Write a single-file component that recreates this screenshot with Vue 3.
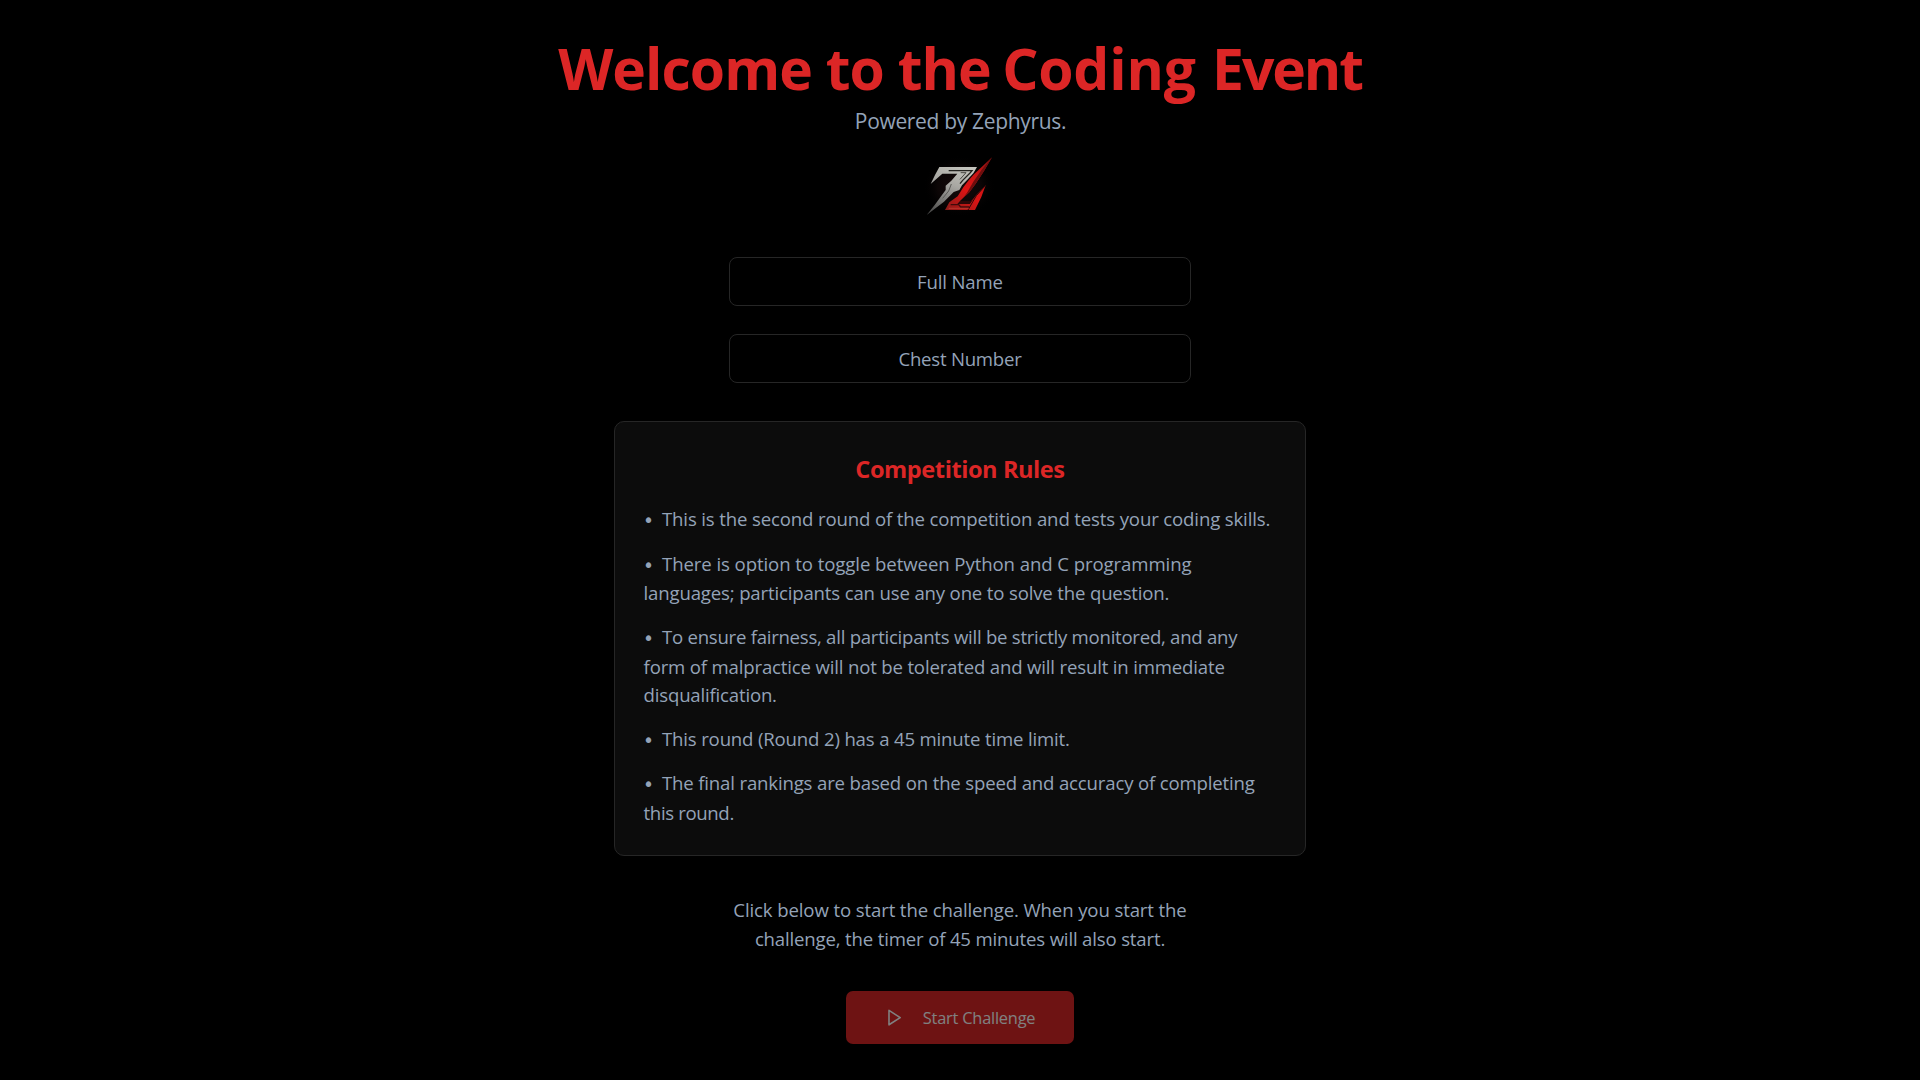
<script setup>
const rules = [
  [{ text: 'This is the second round of the competition and tests your coding skills.', ls: -0.144 }],
  [
    { text: 'There is option to toggle between Python and C programming', ls: -0.085 },
    { text: 'languages; participants can use any one to solve the question.', ls: -0.164 },
  ],
  [
    { text: 'To ensure fairness, all participants will be strictly monitored, and any', ls: -0.26 },
    { text: 'form of malpractice will not be tolerated and will result in immediate', ls: -0.172, shift: 1 },
    { text: 'disqualification.', ls: -0.189, shift: -1 },
  ],
  [{ text: 'This round (Round 2) has a 45 minute time limit.', ls: -0.169 }],
  [
    { text: 'The final rankings are based on the speed and accuracy of completing', ls: -0.165 },
    { text: 'this round.', ls: -0.36, shift: 1 },
  ],
]
const lineStyle = (l) => ({ letterSpacing: l.ls + 'px', marginTop: (l.shift || 0) + 'px' })
</script>

<template>
  <main class="page">
    <h1 class="title">Welcome to the <span class="coding">Coding</span> <span class="event">Event</span></h1>
    <p class="powered">Powered by Zephyrus.</p>
    <svg class="logo" viewBox="0 0 300 240" aria-label="Zephyrus logo">
      <defs>
        <linearGradient id="silver" gradientUnits="userSpaceOnUse" x1="150" y1="60" x2="90" y2="210">
          <stop offset="0" stop-color="#c4c4bd" />
          <stop offset="0.4" stop-color="#a8a7a2" />
          <stop offset="0.65" stop-color="#858481" />
          <stop offset="1" stop-color="#4c4c4b" />
        </linearGradient>
        <linearGradient id="red" gradientUnits="userSpaceOnUse" x1="246" y1="37" x2="110" y2="195">
          <stop offset="0" stop-color="#7c1010" />
          <stop offset="0.3" stop-color="#c81414" />
          <stop offset="0.6" stop-color="#dc1414" />
          <stop offset="1" stop-color="#8c1b18" />
        </linearGradient>
        <radialGradient id="glow">
          <stop offset="0" stop-color="#241010" stop-opacity="0.6" />
          <stop offset="0.6" stop-color="#140a0a" stop-opacity="0.6" />
          <stop offset="1" stop-color="#000" stop-opacity="0" />
        </radialGradient>
      </defs>
      <ellipse cx="148" cy="124" rx="108" ry="92" fill="url(#glow)" />
      <path d="M88 66H201L190 85L172 104L156 121L148 135L131 141L119 153L102 170L50 210L74 180L92 155L107 135V122L124 107L142 86H97L62 117L75 90Z" fill="url(#silver)" />
      <path d="M116 77H186L180 84L158 106L150 116" fill="none" stroke="#24231f" stroke-width="4" />
      <path d="M152 83L168 83L150 103" fill="none" stroke="#4a4944" stroke-width="3" />
      <path d="M124 117L116 138L98 160" fill="none" stroke="#5a5956" stroke-width="3" />
      <path d="M246 37L222 78L197 116L178 142L160 158L150 168H184L199 150L227 121L214 156L195 195H105L118 172L143 154L160 127L176 106L192 88Z" fill="url(#red)" />
      <path d="M246 37L222 78L197 116L178 142L160 158L172 142L190 110L214 76Z" fill="#6f0d0d" />
      <path d="M150 168H184L196 154L180 177H142Z" fill="#2b0808" />
      <path d="M227 121L199 152L174 195" fill="none" stroke="#2b0808" stroke-width="3" />
      <path d="M122 179H146L152 186H178" fill="none" stroke="#3f0b0b" stroke-width="4" />
      <path d="M116 190H176" fill="none" stroke="#b8352c" stroke-width="3" />
    </svg>

    <input class="field" type="text" placeholder="Full Name" />
    <input class="field second" type="text" placeholder="Chest Number" />

    <section class="card">
      <h2>Competition Rules</h2>
      <ul>
        <li v-for="(rule, i) in rules" :key="i">
          <div v-for="(line, j) in rule" :key="j" class="line" :style="lineStyle(line)"><span v-if="j === 0" class="bullet">•</span>{{ line.text }}</div>
        </li>
      </ul>
    </section>

    <p class="note">
      <span class="n1">Click below to start the challenge. When you start the</span>
      <span class="n2">challenge, the timer of 45 minutes will also start.</span>
    </p>

    <button class="start" disabled>
      <svg viewBox="0 0 24 24" fill="none" stroke="currentColor" stroke-width="2" stroke-linecap="round" stroke-linejoin="round"><polygon points="5 3 19 12 5 21 5 3" /></svg>
      <span>Start Challenge</span>
    </button>
  </main>
</template>

<style>
html, body { background: #000; }
</style>

<style scoped>
.page {
  box-sizing: border-box;
  height: 1080px;
  padding-top: 28px;
  display: flex;
  flex-direction: column;
  align-items: center;
  background: #000;
  color: #94a3b8;
  font-family: "Open Sans", "Noto Sans", sans-serif;
  font-size: 18.6px;
  line-height: 29px;
  white-space: nowrap;
  overflow: hidden;
}
h1, h2, p, ul { margin: 0; padding: 0; }
.title {
  margin-top: 1px;
  color: #dc2626;
  font-size: 57px;
  font-weight: 700;
  line-height: 78px;
  letter-spacing: -0.954px;
}
.coding { margin-left: -2.5px; letter-spacing: -0.2px; }
.event { margin-left: 2.5px; letter-spacing: -2.1px; }
.powered {
  padding-left: 1px;
  font-size: 21px;
  line-height: 28px;
  letter-spacing: -0.33px;
}
.logo { width: 100px; height: 80px; margin: 10px 0 32px; flex: none; }
.field {
  box-sizing: border-box;
  flex: none;
  width: 462px;
  height: 49px;
  padding: 0 14px;
  border: 1px solid #262626;
  border-radius: 8px;
  background: #000;
  color: #94a3b8;
  font: inherit;
  letter-spacing: -0.158px;
  text-align: center;
  outline: none;
}
.field::placeholder { color: #94a3b8; opacity: 1; }
.second { margin-top: 28px; letter-spacing: -0.237px; }
.card {
  box-sizing: border-box;
  flex: none;
  width: 692px;
  height: 435px;
  margin-top: 38px;
  padding: 31px 28px 0;
  border: 1px solid #262626;
  border-radius: 10px;
  background: #0c0c0c;
}
h2 {
  color: #dc2626;
  font-size: 23.6px;
  font-weight: 700;
  line-height: 32px;
  letter-spacing: -0.439px;
  text-align: center;
}
ul { margin-top: 19px; list-style: none; }
li + li { margin-top: 15px; }
li:nth-child(2) { margin-top: 16px; }
li { display: flex; flex-direction: column; }
.line { height: 29px; }
.line + .line { padding-left: 0.6px; }
.bullet {
  display: inline-block;
  width: 19px;
  height: 29px;
  font-family: "DejaVu Sans", sans-serif;
  line-height: 33px;
  vertical-align: top;
}
.note {
  margin-top: 39px;
  display: flex;
  flex-direction: column;
  align-items: center;
}
.n1 { letter-spacing: -0.12px; }
.n2 { letter-spacing: -0.167px; }
.start {
  box-sizing: border-box;
  flex: none;
  display: flex;
  align-items: center;
  gap: 19px;
  width: 228px;
  height: 53px;
  margin-top: 38px;
  padding: 0 0 0 38.6px;
  border: 0;
  border-radius: 7px;
  background: #dc2626;
  color: #fff;
  font: 16.4px/23px "Open Sans", "Noto Sans", sans-serif;
  letter-spacing: -0.22px;
  opacity: 0.5;
}
.start svg { width: 19.2px; height: 19.2px; flex: none; }
</style>
